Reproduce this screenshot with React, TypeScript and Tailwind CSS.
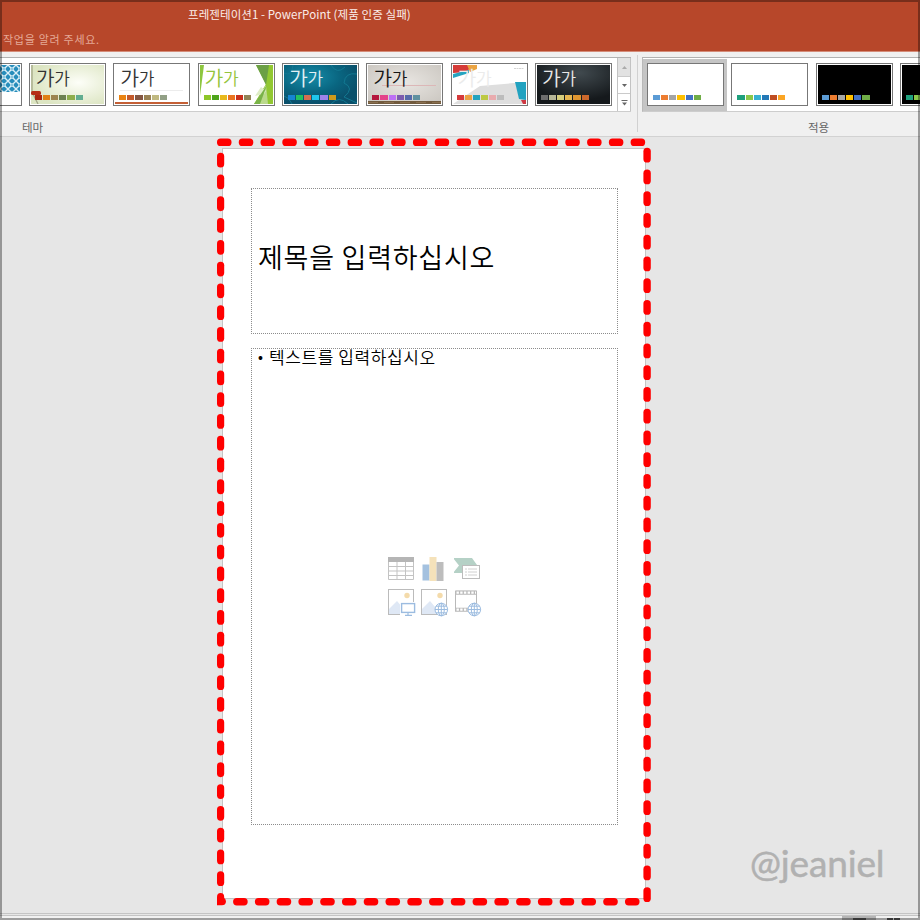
import React from 'react';

const SWATCHES = {
  organic: ['#a9260f', '#e08014', '#9d8550', '#6d8250', '#8eae4c', '#62ad90'],
  retro: ['#ea8312', '#c45a2c', '#845642', '#998254', '#c0b981', '#92a086'],
  facet: ['#8dc628', '#4ea51c', '#e8b91c', '#ea7420', '#c92f1c', '#918456'],
  depth: ['#1585d3', '#23c160', '#d66e50', '#1ec8ee', '#9d83eb', '#cf9a1b'],
  gallery: ['#b5173d', '#e44289', '#bd70f5', '#7c5bae', '#566aa9', '#5f91a0'],
  parcel: ['#d63a3c', '#eba243', '#22a3bf', '#bdc942', '#e9abae', '#bcbcbc'],
  mesh: ['#6c6c6c', '#b5b596', '#d5cd7c', '#e6b650', '#df9530', '#cc682c'],
  office: ['#5b9bd5', '#ed7d31', '#a5a5a5', '#ffc000', '#4472c4', '#70ad47'],
  variant: ['#1fa07d', '#8bc84a', '#37b2d2', '#2379b7', '#bf4d22', '#fba524'],
};

function Thumb({
  colors,
  frame = 'bg-white',
  text,
  children,
}: {
  colors: string[];
  frame?: string;
  text?: string;
  children?: React.ReactNode;
}) {
  return (
    <div className={`relative h-[43px] w-[77px] shrink-0 overflow-hidden border border-[#777] ${frame}`}>
      <svg className="absolute left-px top-px" width="73" height="39" viewBox="0 0 73 39">
        {children}
      </svg>
      {text && (
        <div className={`absolute left-[6px] top-0 flex items-center whitespace-nowrap font-[350] leading-[24px] ${text}`}>
          <span className="w-[18.5px] text-[20.5px]">가</span>
          <span className="pt-[2px] text-[17px]">가</span>
        </div>
      )}
      <div className="absolute left-[5px] top-[31px] flex gap-px">
        {colors.map((c, i) => (
          <span key={i} className="h-[5px] w-[7.15px]" style={{ backgroundColor: c }} />
        ))}
      </div>
    </div>
  );
}

function Header() {
  return (
    <header className="h-[52px] overflow-hidden border-b border-[#d58c79] bg-[#b7472a] text-[11px]">
      <div className="whitespace-nowrap pl-[188px] pt-[5px] text-[11.5px] leading-[18px] tracking-[0.08px] text-[#fbeeea]">
        프레젠테이션1 - PowerPoint (제품 인증 실패)
      </div>
      <div className="pl-[3px] pt-[7px] leading-[18px] tracking-[0.72px] text-[#e5a997]">작업을 알려 주세요.</div>
    </header>
  );
}

function ThemeGallery() {
  return (
    <div className="flex h-[55px] w-[631px] border-y border-t-[#b1b1b1] border-b-[#cdcdcd] bg-white">
      <div className="flex w-[617px] gap-[7.35px] pt-[5px]">
        <div className="h-[43px] w-[21.5px] shrink-0 border border-l-0 border-[#777] bg-white pt-px">
          <svg width="20" height="27" viewBox="0 0 20 27">
            <defs>
              <pattern id="lattice" width="8" height="8" patternUnits="userSpaceOnUse">
                <rect width="8" height="8" fill="#278dbb" />
                <path d="M0 0L8 8M8 0L0 8" stroke="#d9eef7" strokeWidth="1.4" />
                <path d="M4 2L6 4L4 6L2 4Z" fill="#e1f3fa" />
                <circle cx="4" cy="4" r=".8" fill="#278dbb" />
              </pattern>
            </defs>
            <rect width="20" height="27" fill="url(#lattice)" />
          </svg>
        </div>
        <Thumb colors={SWATCHES.organic} text="text-[#333]">
          <defs>
            <radialGradient id="organicBg" cx=".65" cy=".45" r=".65">
              <stop offset="0" stopColor="#fdfef8" />
              <stop offset="1" stopColor="#dce5c2" />
            </radialGradient>
          </defs>
          <rect width="73" height="39" fill="url(#organicBg)" />
          <path d="M1 0V27L7 39" stroke="#a3a787" strokeWidth="1.3" fill="none" />
          <rect y="26" width="10" height="4" rx="1.5" fill="#b62d14" />
        </Thumb>
        <Thumb colors={SWATCHES.retro} text="text-[#333]">
          <path d="M5 25.5H68" stroke="#e4e4e4" strokeWidth=".7" />
          <rect y="37" width="73" height="2" fill="#c45f35" />
        </Thumb>
        <Thumb colors={SWATCHES.facet} text="text-[#94c43c]">
          <path d="M0 0H4L0 31Z" fill="#8dc63f" />
          <path d="M56 0H73V39H54L66 19Z" fill="#92c832" />
          <path d="M56 0H69L66 20Z" fill="#6b9f45" />
          <path d="M66 20L68 39H55Z" fill="#bad98b" />
          <path d="M61 22L66 26L64 29L55 31Z" fill="#deedc5" />
          <path d="M67 20L60 39H54Z" fill="#79b348" />
        </Thumb>
        <Thumb colors={SWATCHES.depth} text="text-[#e3f0f5]">
          <defs>
            <radialGradient id="depthBg" cx=".35" cy=".3" r=".7">
              <stop offset="0" stopColor="#168da9" />
              <stop offset=".6" stopColor="#096580" />
              <stop offset="1" stopColor="#0a506b" />
            </radialGradient>
          </defs>
          <rect width="73" height="39" fill="url(#depthBg)" />
          <path d="M0 8Q8 12 9 0M47 0Q53 10 61 2M73 9Q61 7 60 18Q71 23 60 32L73 38M47 39Q55 30 64 39M8 39Q5 32 0 31" fill="none" stroke="#127891" strokeWidth="1" />
        </Thumb>
        <Thumb colors={SWATCHES.gallery} text="text-[#151515]">
          <defs>
            <radialGradient id="galleryBg" cx=".5" cy=".45" r=".7">
              <stop offset="0" stopColor="#e9e6e2" />
              <stop offset="1" stopColor="#cbc7c1" />
            </radialGradient>
          </defs>
          <rect width="73" height="39" fill="url(#galleryBg)" />
          <path d="M14 20.5H68" stroke="#dcb7b7" />
          <rect y="36" width="73" height="3" fill="#715a3d" />
          <path d="M0 37.5H73" stroke="#8a7050" strokeDasharray="10 6" />
        </Thumb>
        <Thumb colors={SWATCHES.parcel} text="text-[#ebebeb]">
          <path d="M0 39L27 21L73 17V39Z" fill="#dedede" />
          <path d="M0 0H19L14 7L0 8Z" fill="#d53b38" />
          <path d="M14 0H24V4L17 7Z" fill="#eaa342" />
          <path d="M0 9L16 5V8L0 13Z" fill="#26a4c0" />
          <path d="M62 17H73V35L66 34Z" fill="#22a2c0" />
          <path d="M68 35H73V39H70Z" fill="#cf3843" />
          <path d="M61 3.5H71" stroke="#d4d4d4" strokeDasharray="2 .5" />
        </Thumb>
        <Thumb colors={SWATCHES.mesh} text="text-[#e8e8e8]">
          <defs>
            <radialGradient id="meshBg" cx=".58" cy=".2" r=".7">
              <stop offset="0" stopColor="#414a4f" />
              <stop offset="1" stopColor="#15191c" />
            </radialGradient>
          </defs>
          <rect width="73" height="39" fill="url(#meshBg)" />
        </Thumb>
      </div>
      <div className="flex w-[14px] flex-col border-x border-[#c3c3c3]">
        <div className="flex h-[19px] items-center justify-center border-b border-[#cacaca] bg-[#e2e2e2]">
          <svg width="5" height="3"><path d="M0 3L2.5 0L5 3Z" fill="#aaa" /></svg>
        </div>
        <div className="flex h-[17px] items-center justify-center border-b border-[#cacaca]">
          <svg width="5" height="3"><path d="M0 0L2.5 3L5 0Z" fill="#666" /></svg>
        </div>
        <div className="flex flex-1 items-center justify-center">
          <svg width="7" height="6"><path d="M.5 .5H6.5" stroke="#666" /><path d="M1 2.5L3.5 5.5L6 2.5Z" fill="#666" /></svg>
        </div>
      </div>
    </div>
  );
}

function VariantGallery() {
  return (
    <div className="flex h-[55px] w-[278px] overflow-hidden border-y border-l border-b-[#cdcdcd] border-l-[#b9b9b9] border-t-[#b1b1b1] bg-white">
      <div className="h-[53px] w-[84px] shrink-0 border-t border-t-white bg-[#c5c5c5] pl-[4px] pt-[4px]">
        <Thumb colors={SWATCHES.office} />
      </div>
      <div className="flex gap-[7.4px] pl-[4.4px] pt-[5px]">
        <Thumb colors={SWATCHES.variant} />
        <Thumb colors={SWATCHES.office}>
          <rect width="73" height="39" fill="#000" />
        </Thumb>
        <Thumb colors={SWATCHES.variant}>
          <rect width="73" height="39" fill="#000" />
        </Thumb>
      </div>
    </div>
  );
}

function Ribbon() {
  return (
    <section className="flex h-[85px] border-b border-[#d2d2d2] bg-[#f0f0f0] text-[11.5px] text-[#666]">
      <div className="w-[637px] pt-[5px]">
        <ThemeGallery />
        <div className="pl-[22px] pt-[6px] leading-[18px]">테마</div>
      </div>
      <div className="mt-[3px] h-[77px] w-px bg-[#d1d1d1]" />
      <div className="w-[282px] pl-[4px] pt-[5px]">
        <VariantGallery />
        <div className="pl-[166px] pt-[6px] leading-[18px]">적용</div>
      </div>
    </section>
  );
}

function Globe() {
  return (
    <g fill="none" stroke="#9cbce0" strokeWidth="1">
      <circle cx="20.3" cy="20.5" r="6.3" fill="#fff" />
      <ellipse cx="20.3" cy="20.5" rx="3" ry="6.3" />
      <path d="M20.3 14V27M14 20.5H26.6M15 17.2H25.6M15 23.8H25.6" />
    </g>
  );
}

function Photo() {
  return (
    <>
      <rect x=".5" y=".5" width="25" height="25" fill="#fff" stroke="#bbb" />
      <circle cx="19" cy="6.5" r="2.7" fill="#f4dbab" />
      <path d="M1 20L9 12L20 25H1Z" fill="#dfe8f5" />
    </>
  );
}

function InsertIcons() {
  return (
    <div className="grid grid-cols-[33px_33px_28px] gap-y-[4px] [&>svg]:h-[28px] [&>svg]:w-[28px]">
      <svg viewBox="0 0 28 28">
        <path d="M.5 1H25.5V22.5H.5ZM9 5V23M17.5 5V23M0 9.5H26M0 14H26M0 18.5H26" fill="none" stroke="#c3c3c3" />
        <rect width="26" height="5" fill="#b5b5b5" />
      </svg>
      <svg viewBox="0 0 28 28">
        <rect x="1.5" y="7.5" width="7" height="16" fill="#a4c1df" />
        <rect x="8.5" y="0" width="7" height="24" fill="#f5e2ba" />
        <rect x="15.5" y="5" width="7" height="19" fill="#bdbdbd" />
      </svg>
      <svg viewBox="0 0 28 28">
        <path d="M-1 1H18L23 8V16H-1L5 8.5Z" fill="#b5d1c6" />
        <rect x="8.5" y="8.5" width="17" height="13" fill="#fff" stroke="#bcbcbc" />
        <path d="M11 12H13M14 12H23M11 15H13M14 15H23M11 18H13M14 18H23" stroke="#d0d0d0" />
      </svg>
      <svg viewBox="0 0 28 28">
        <Photo />
        <rect x="12" y="13" width="15.5" height="14" fill="#fff" />
        <rect x="13.6" y="14.6" width="13" height="8.8" fill="#fff" stroke="#9cbce0" strokeWidth="1.4" />
        <path d="M20 24V26M17 26.4H24" stroke="#9cbce0" strokeWidth="1.2" />
      </svg>
      <svg viewBox="0 0 28 28">
        <Photo />
        <Globe />
      </svg>
      <svg viewBox="0 0 28 28">
        <path d="M1.5 22V2H22.5V15" fill="none" stroke="#b9b9b9" />
        <path d="M1 3.7H23M1 20.7H14" stroke="#b9b9b9" strokeWidth="4" />
        <path d="M2.5 3.7H22M2.5 20.7H14" stroke="#fff" strokeWidth="2.2" strokeDasharray="2.4 1.3" />
        <Globe />
      </svg>
    </div>
  );
}

function Slide() {
  return (
    <div className="h-[751px] w-[424px] border border-[#c5c5c5] bg-white pl-[28px] pt-[39px]">
      <div className="flex h-[146px] w-[367px] items-center pl-[7px] outline-1 -outline-offset-1 outline-dotted outline-[#8c8c8c]">
        <h1 className="mt-[-8px] whitespace-nowrap text-[27px] font-[350] leading-[38px] tracking-[0.75px] text-black">제목을 입력하십시오</h1>
      </div>
      <div className="mt-[14px] flex h-[477px] w-[367px] flex-col outline-1 -outline-offset-1 outline-dotted outline-[#8c8c8c]">
        <div className="flex h-[18px] items-center whitespace-nowrap pl-[7px] text-[17px] font-[350] leading-[18px] text-black">
          <span className="w-[11px] text-[13px] font-bold">•</span>
          <span className="tracking-[0.6px]">텍스트를 입력하십시오</span>
        </div>
        <div className="pl-[137px] pt-[191px]">
          <InsertIcons />
        </div>
      </div>
    </div>
  );
}

function DashedOutline() {
  return (
    <svg className="pointer-events-none absolute left-0 top-0" width="920" height="920">
      <g fill="#ff0000">
        {Array.from({ length: 20 }, (_, i) => (
          <rect key={i} x={217 + i * 21.77} y="138.5" width="14.5" height="7.5" rx="3.6" />
        ))}
        {Array.from({ length: 34 }, (_, i) => (
          <rect key={i} x="217" y={152.8 + i * 21.77} width="7.2" height="14.8" rx="3.6" />
        ))}
        {Array.from({ length: 35 }, (_, i) => (
          <rect key={i} x="643.4" y={147.8 + i * 21.75} width="7.4" height="14.8" rx="3.7" />
        ))}
        {Array.from({ length: 19 }, (_, i) => (
          <rect key={i} x={233.1 + i * 21.77} y="898" width="14.6" height="7.5" rx="3.7" />
        ))}
        <path d="M217 897A3.6 4 0 0 1 224.2 897V898Q226 899 226 901.8Q225.5 905.3 222 905.3H217Z" />
      </g>
    </svg>
  );
}

export default function App() {
  return (
    <div className="relative h-[920px] w-[920px] overflow-hidden bg-[#e6e6e6] font-['Noto_Sans_CJK_KR',sans-serif]">
      <Header />
      <Ribbon />
      <main className="h-[776px] overflow-hidden pl-[222px] pt-[11px]">
        <Slide />
      </main>
      <footer className="flex h-[7px] justify-end border-t border-[#c4c4c4] pt-px">
        <div className="flex h-[5px] w-full justify-end border-t border-[#c4c4c4] bg-[#f1f1f1]">
          <div className="mr-[12px] flex w-[66px] items-end">
            <div className="flex h-[4px] w-[34px] items-end justify-center bg-[#b5b5b5]">
              <span className="h-[2px] w-[13px] bg-[#555]" />
            </div>
            <span className="ml-[11px] h-[2px] w-[6px] bg-[#555]" />
            <span className="ml-px h-[2px] w-[6px] bg-[#555]" />
          </div>
        </div>
      </footer>
      <DashedOutline />
      <div className="absolute left-[750px] top-[838px] font-['Lato',sans-serif] text-[37px] leading-[50px] tracking-[-0.15px] text-[#b1b1b1] [-webkit-text-stroke:0.5px_#b1b1b1]">@jeaniel</div>
      <div className="pointer-events-none absolute inset-0 border-2 border-black/35" />
    </div>
  );
}
